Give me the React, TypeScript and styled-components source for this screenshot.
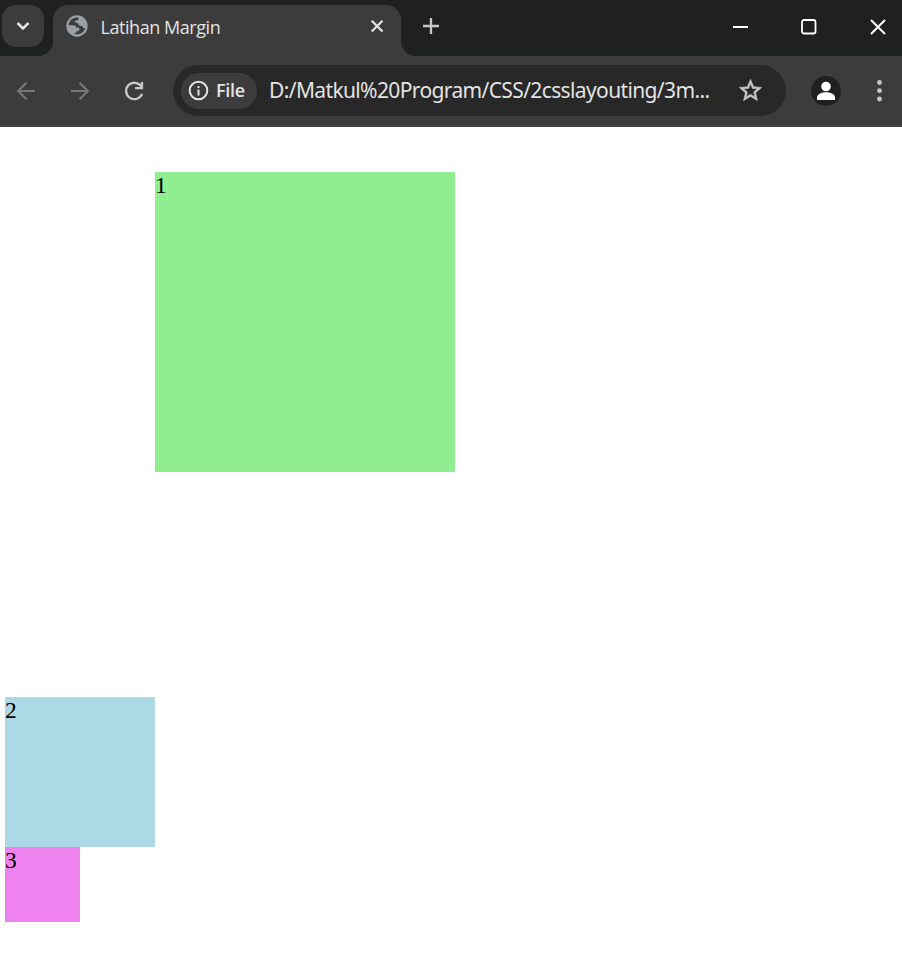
import React from "react";
import styled, { createGlobalStyle } from "styled-components";

const GlobalStyle = createGlobalStyle`
  * { box-sizing: border-box; }
  body { margin: 0; background: #fff; overflow: hidden; }
  svg { display: block; flex: none; }
`;

const Window = styled.div`
  width: 902px;
  height: 959px;
  display: flex;
  flex-direction: column;
  background: #fff;
  font-family: "Open Sans", "Noto Sans", sans-serif;
`;

const TabStrip = styled.header`
  height: 56px;
  flex: none;
  display: flex;
  background: #1f2120;
`;

const TabSearch = styled.button`
  width: 42px;
  height: 42px;
  margin: 5px 9px 0 2px;
  padding: 0;
  border: 0;
  border-radius: 14px;
  background: #3c3c3c;
`;

const Tab = styled.div`
  position: relative;
  width: 348px;
  height: 51px;
  margin-top: 5px;
  padding: 0 13px 9px;
  display: flex;
  align-items: center;
  background: #3c3c3c;
  border-radius: 15px 15px 0 0;
  &::before, &::after {
    content: "";
    position: absolute;
    bottom: 0;
    width: 15px;
    height: 15px;
  }
  &::before { left: -15px; background: radial-gradient(circle at 0 0, transparent 14.5px, #3c3c3c 15.5px); }
  &::after { right: -15px; background: radial-gradient(circle at 100% 0, transparent 14.5px, #3c3c3c 15.5px); }
`;

const TabTitle = styled.span`
  flex: 1;
  margin-left: 12.5px;
  padding-top: 2px;
  color: #e3e3e3;
  font-size: 18px;
  line-height: 24px;
  letter-spacing: -0.45px;
  white-space: nowrap;
`;

const NewTab = styled.div`
  margin: 17px 0 0 21px;
`;

const WindowControls = styled.div`
  margin: 19px 16px 0 auto;
  display: flex;
  gap: 52px;
`;

const Toolbar = styled.nav`
  height: 71px;
  flex: none;
  display: flex;
  align-items: center;
  padding: 0 8px 0 14px;
  background: #3c3c3c;
  border-bottom: 2px solid #474747;
`;

const NavButtons = styled.div`
  display: flex;
  gap: 30px;
  width: 159px;
`;

const AddressBar = styled.div`
  width: 613px;
  height: 51px;
  display: flex;
  align-items: center;
  padding: 0 22px 0 8px;
  border-radius: 26px;
  background: #282828;
`;

const FileChip = styled.div`
  width: 76px;
  height: 36px;
  display: flex;
  align-items: center;
  gap: 7px;
  padding-left: 7px;
  border-radius: 18px;
  background: #3c3c3c;
  color: #e3e3e3;
  font-size: 18px;
  font-weight: 600;
  letter-spacing: -0.3px;
  line-height: 24px;
  padding-bottom: 1px;
`;

const Address = styled.span`
  flex: 1;
  margin-left: 12px;
  padding-bottom: 2px;
  color: #e3e3e3;
  font-family: "Noto Sans", sans-serif;
  font-size: 21px;
  line-height: 28px;
  letter-spacing: -0.63px;
  white-space: nowrap;
`;

const Profile = styled.div`
  width: 30px;
  height: 30px;
  margin: 0 35px 0 25px;
  border-radius: 50%;
  background: #1f2120;
`;

const Page = styled.main`
  flex: 1;
  padding: 45px 5px 0;
  color: #000;
  font-family: "Liberation Serif", serif;
  font-size: 23.5px;
  line-height: 27px;
`;

const Box = styled.div<{ $size: number; $color: string; $margin?: string }>`
  width: ${(p) => p.$size}px;
  height: ${(p) => p.$size}px;
  margin: ${(p) => p.$margin ?? "0"};
  background: ${(p) => p.$color};
`;

export default function App() {
  return (
    <>
      <GlobalStyle />
      <Window>
        <TabStrip>
          <TabSearch aria-label="Search tabs">
            <svg width="42" height="42" fill="none" stroke="#e3e3e3" strokeWidth="2.5">
              <path d="M15.5 18l5.5 5.5 5.5-5.5" />
            </svg>
          </TabSearch>
          <Tab>
            <svg width="22" height="22" viewBox="0 0 22 22">
              <circle cx="11" cy="11" r="9.6" fill="none" stroke="#9aa0a6" strokeWidth="2.2" />
              <path fill="#9aa0a6" d="M12.5 1.5v2.2c0 1.2-.8 1.8-2 1.8H9v2c1.8 0 3 .6 3.6 1.9.5 1.2 1.4 1.7 2.8 1.7h1.4v1.8h3.7l.3-3.9-2.5-4.8L15 1.8z" />
              <path fill="#9aa0a6" d="M1.3 10.2h6c1.8 0 3 .8 3.3 2.6h2.7v1.7c0 1.2-.7 1.7-1.8 1.7h-1.3v1.9H8.5v2l-3.7-1.7-3-4.2z" />
            </svg>
            <TabTitle>Latihan Margin</TabTitle>
            <svg width="22" height="22" fill="none" stroke="#e3e3e3" strokeWidth="2.2">
              <path d="M5.7 5.7l10.8 10.8M16.5 5.7L5.7 16.5" />
            </svg>
          </Tab>
          <NewTab>
            <svg width="18" height="18" fill="none" stroke="#c7c7c7" strokeWidth="2.3">
              <path d="M9 1v16M1 9h16" />
            </svg>
          </NewTab>
          <WindowControls>
            <svg width="17" height="17" stroke="#fff" strokeWidth="2"><path d="M2 8h15" /></svg>
            <svg width="17" height="17" fill="none" stroke="#fff" strokeWidth="1.8">
              <rect x="2" y="1" width="13.5" height="13.5" rx="2" />
            </svg>
            <svg width="17" height="17" stroke="#fff" strokeWidth="2"><path d="M2 1l14 14M16 1L2 15" /></svg>
          </WindowControls>
        </TabStrip>
        <Toolbar>
          <NavButtons>
            <svg width="24" height="24" fill="none" stroke="#777" strokeWidth="2.2">
              <path d="M21 12H4M12.5 3.7L4.2 12l8.3 8.3" />
            </svg>
            <svg width="24" height="24" fill="none" stroke="#777" strokeWidth="2.2">
              <path d="M3 12h17M11.5 3.7l8.3 8.3-8.3 8.3" />
            </svg>
            <svg width="24" height="24" fill="none" stroke="#c7c7c7" strokeWidth="2.3">
              <path d="M19.2 7.5A8.2 8.2 0 1 0 20 14.8M20 3v6.2h-7" />
            </svg>
          </NavButtons>
          <AddressBar>
            <FileChip>
              <svg width="21" height="21" fill="none" stroke="#e3e3e3" strokeWidth="2">
                <circle cx="10.5" cy="10.5" r="8.8" />
                <path d="M10.5 9.5v6M10.5 6v2" />
              </svg>
              File
            </FileChip>
            <Address>D:/Matkul%20Program/CSS/2csslayouting/3m...</Address>
            <svg width="27" height="27" viewBox="0 0 24 24" fill="#c7c7c7" stroke="#c7c7c7" strokeWidth="0.5">
              <path d="M22 9.24l-7.19-.62L12 2 9.19 8.63 2 9.24l5.46 4.73L5.82 21 12 17.27 18.18 21l-1.63-7.03zM12 15.4l-3.76 2.27 1-4.28-3.32-2.88 4.38-.38L12 6.1l1.71 4.04 4.38.38-3.32 2.88 1 4.28z" />
            </svg>
          </AddressBar>
          <Profile>
            <svg width="30" height="30" fill="#fff">
              <circle cx="15" cy="10.5" r="4.8" />
              <path d="M6 24v-2.5c0-3.5 5-5.2 9-5.2s9 1.7 9 5.2V24z" />
            </svg>
          </Profile>
          <svg width="8" height="24" fill="#c7c7c7">
            <circle cx="3.5" cy="3.5" r="2.4" />
            <circle cx="3.5" cy="11.7" r="2.4" />
            <circle cx="3.5" cy="20" r="2.4" />
          </svg>
        </Toolbar>
        <Page>
          <Box $size={300} $color="lightgreen" $margin="0 0 225px 150px">1</Box>
          <Box $size={150} $color="lightblue">2</Box>
          <Box $size={75} $color="violet">3</Box>
        </Page>
      </Window>
    </>
  );
}
